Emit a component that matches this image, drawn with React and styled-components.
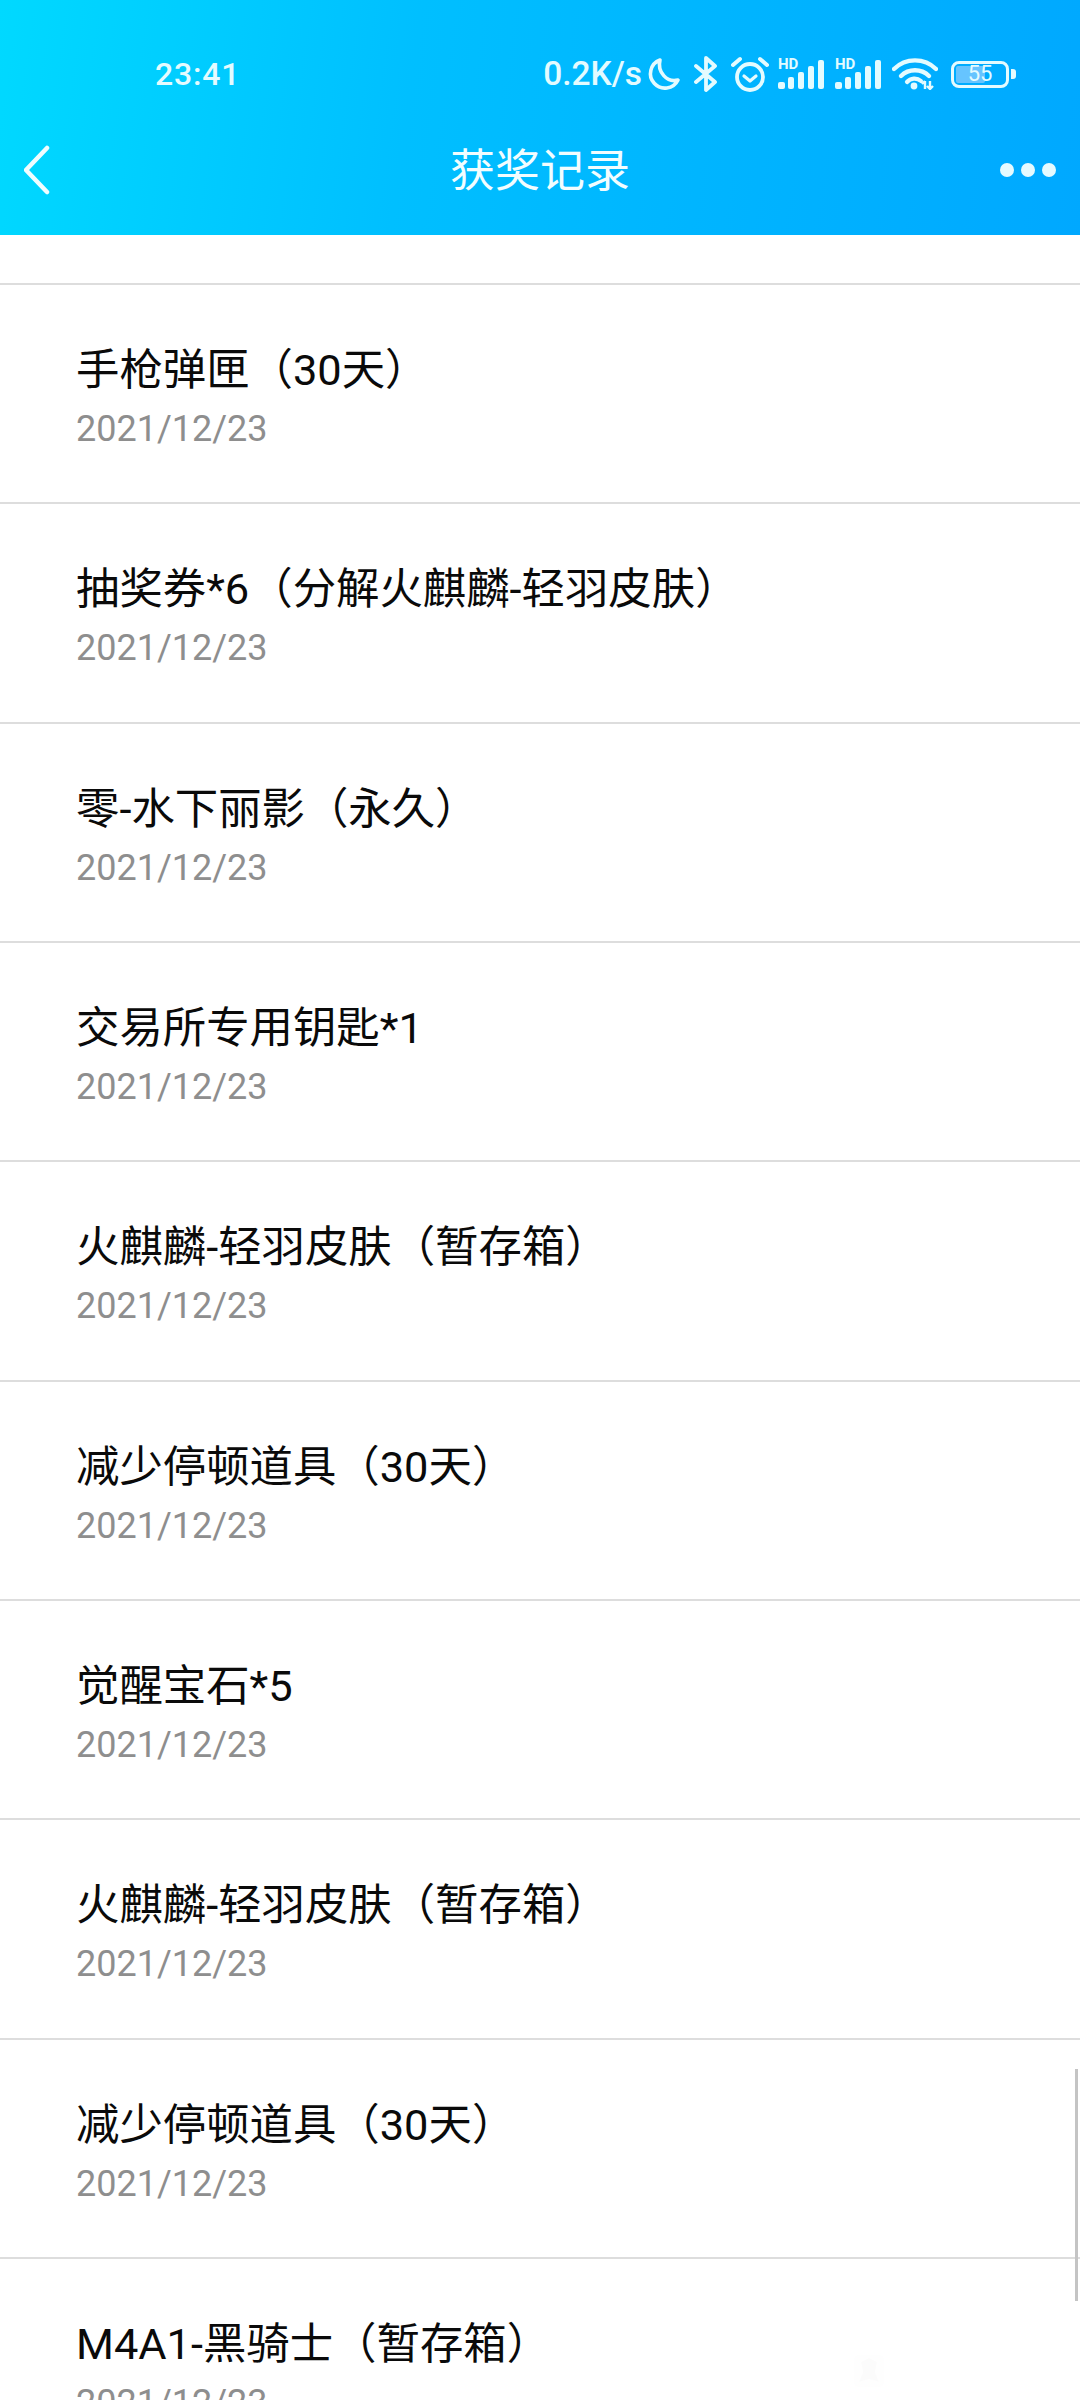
import React from "react";
import styled, { createGlobalStyle } from "styled-components";

const Global = createGlobalStyle`
  html, body { margin: 0; padding: 0; background: #fff; }
  body { font-family: Roboto, "Noto Sans CJK SC", sans-serif; }
  * { box-sizing: border-box; }
`;

const Page = styled.div`
  position: relative;
  width: 1080px;
  height: 2400px;
  overflow: hidden;
  background: #fff;
`;

const Header = styled.header`
  height: 235px;
  background: linear-gradient(98deg, #00d9ff 0%, #00bfff 38%, #00a8ff 100%);
  color: #fff;
`;

const StatusBar = styled.div`
  display: flex;
  align-items: center;
  height: 110px;
  padding: 38px 64px 0 155px;
`;

const Time = styled.span`
  font: 500 32px/1 Roboto, sans-serif;
  letter-spacing: 0.8px;
  color: #e4fbff;
`;

const StatusRight = styled.div`
  margin-left: auto;
  display: flex;
  align-items: center;
`;

const Speed = styled.span`
  font: 500 33.5px/1 Roboto, sans-serif;
  color: #e4fbff;
  margin-right: 5px;
`;

const StatusIcon = styled.svg`
  display: block;
  flex: none;
  margin-left: ${(p) => p.$gap || 0}px;
`;

const SignalIcon = styled(StatusIcon)`
  margin-top: -4px;
`;

const BatteryBox = styled.div`
  position: relative;
  width: 58px;
  height: 27px;
  margin-left: 13px;
  border: 3.5px solid #e4fbff;
  border-radius: 8px;
  display: flex;
  align-items: center;
  justify-content: center;
  overflow: hidden;
`;

const BatteryFill = styled.div`
  position: absolute;
  left: 2px;
  top: 2px;
  bottom: 2px;
  width: 55%;
  background: #66c4ff;
  border-radius: 2px;
`;

const BatteryText = styled.span`
  position: relative;
  font: 400 22px/26px Roboto, sans-serif;
  color: #e4fbff;
`;

const BatteryTip = styled.div`
  width: 5px;
  height: 10px;
  margin-left: 2px;
  background: #e4fbff;
  border-radius: 0 3px 3px 0;
`;

const TitleBar = styled.div`
  position: relative;
  height: 125px;
  display: flex;
  align-items: center;
  justify-content: space-between;
  padding: 0 24px 6px 24px;
`;

const Title = styled.h1`
  position: absolute;
  left: 0;
  right: 0;
  top: 30px;
  margin: 0;
  text-align: center;
  font: 400 45px/56px "Noto Sans CJK SC", sans-serif;
  color: #f2fdff;
`;

const Dots = styled.div`
  display: flex;
  gap: 7px;
`;

const Dot = styled.span`
  width: 14px;
  height: 14px;
  border-radius: 50%;
  background: #e6faff;
`;

const List = styled.div`
  padding-top: 48px;
`;

const Row = styled.div`
  height: 219.33px;
  border-top: 2px solid #dddddd;
  padding: 58px 0 0 76px;
`;

const ItemTitle = styled.div`
  font: 400 43.4px/56px Roboto, "Noto Sans CJK SC", sans-serif;
  color: #0a0a0a;
  white-space: pre;
`;

const ItemDate = styled.div`
  margin-top: 8px;
  font: 400 36px/44px Roboto, sans-serif;
  color: #8e8e8e;
`;

const ScrollThumb = styled.div`
  position: absolute;
  right: 2px;
  top: 2069px;
  width: 3px;
  height: 232px;
  background: #c4c4c4;
`;

const Watermark = styled.svg`
  position: absolute;
  left: 853px;
  top: 2354px;
`;

const items = [
  "手枪弹匣（30天）",
  "抽奖券*6（分解火麒麟-轻羽皮肤）",
  "零-水下丽影（永久）",
  "交易所专用钥匙*1",
  "火麒麟-轻羽皮肤（暂存箱）",
  "减少停顿道具（30天）",
  "觉醒宝石*5",
  "火麒麟-轻羽皮肤（暂存箱）",
  "减少停顿道具（30天）",
  "M4A1-黑骑士（暂存箱）",
];

const ICON = "#e4fbff";

const Signal = ({ gap }) => (
  <SignalIcon $gap={gap} width="47" height="34" viewBox="0 -4 47 34">
    <text x="0" y="10" fontFamily="Roboto, sans-serif" fontWeight="700" fontSize="15" fill={ICON}>HD</text>
    <rect x="0" y="23" width="7" height="7" rx="2" fill={ICON} />
    <rect x="10" y="18" width="6" height="12" rx="2" fill={ICON} />
    <rect x="20" y="13" width="6" height="17" rx="2" fill={ICON} />
    <rect x="30" y="7" width="6" height="23" rx="2" fill={ICON} />
    <rect x="40" y="1" width="6" height="29" rx="2" fill={ICON} />
  </SignalIcon>
);

export default function App() {
  return (
    <Page>
      <Global />
      <Header>
        <StatusBar>
          <Time>23:41</Time>
          <StatusRight>
            <Speed>0.2K/s</Speed>
            <StatusIcon width="34" height="34" viewBox="0 0 34 34" fill="none">
              <path d="M13 3 A14.5 14.5 0 1 0 31 23 C20 26 10 15 13 3 Z" stroke={ICON} strokeWidth="3.6" strokeLinejoin="round" />
            </StatusIcon>
            <StatusIcon $gap={13} width="24" height="38" viewBox="0 0 24 38" fill="none">
              <path d="M2 11 L21 27 L12 35 V3 L21 11 L2 27" stroke={ICON} strokeWidth="3.8" strokeLinejoin="round" strokeLinecap="round" />
            </StatusIcon>
            <StatusIcon $gap={13} width="38" height="36" viewBox="0 0 38 36" fill="none">
              <circle cx="19" cy="21" r="13" stroke={ICON} strokeWidth="3.8" />
              <path d="M13 20 L19 25 L25 20" stroke={ICON} strokeWidth="3.2" strokeLinecap="round" strokeLinejoin="round" />
              <path d="M2 9 L9 3 M36 9 L29 3" stroke={ICON} strokeWidth="4" strokeLinecap="round" />
            </StatusIcon>
            <Signal gap={9} />
            <Signal gap={10} />
            <StatusIcon $gap={10} width="46" height="32" viewBox="0 0 46 32" fill="none">
              <path d="M2 11 A30 30 0 0 1 44 11" stroke={ICON} strokeWidth="4.4" strokeLinecap="round" />
              <path d="M9 18 A20 20 0 0 1 37 18" stroke={ICON} strokeWidth="4.4" strokeLinecap="round" />
              <path d="M15 24 A10 10 0 0 1 29 23" stroke={ICON} strokeWidth="4.2" strokeLinecap="round" />
              <circle cx="22" cy="28" r="3.4" fill={ICON} />
              <path d="M33 31 V23 M30 26 L33 23 M38 23 V31 M35 28 L38 31 L41 28" stroke={ICON} strokeWidth="2.4" />
            </StatusIcon>
            <BatteryBox>
              <BatteryFill />
              <BatteryText>55</BatteryText>
            </BatteryBox>
            <BatteryTip />
          </StatusRight>
        </StatusBar>
        <TitleBar>
          <svg width="26" height="50" viewBox="0 0 26 50" fill="none">
            <path d="M23 3 L2 25 L23 47" stroke="#f0fdff" strokeWidth="4.5" strokeLinecap="round" strokeLinejoin="round" />
          </svg>
          <Title>获奖记录</Title>
          <Dots>
            <Dot />
            <Dot />
            <Dot />
          </Dots>
        </TitleBar>
      </Header>
      <List>
        {items.map((t, i) => (
          <Row key={i}>
            <ItemTitle>{t}</ItemTitle>
            <ItemDate>2021/12/23</ItemDate>
          </Row>
        ))}
      </List>
      <ScrollThumb />
      <Watermark width="32" height="34" viewBox="0 0 32 34">
        <rect x="1" y="1" width="30" height="32" rx="3" fill="#000" fillOpacity="0.005" />
        <path d="M8 8 L16 4 L24 8 L22 18 L26 28 L16 25 L6 28 L10 18 Z" fill="#000" fillOpacity="0.012" />
      </Watermark>
    </Page>
  );
}
